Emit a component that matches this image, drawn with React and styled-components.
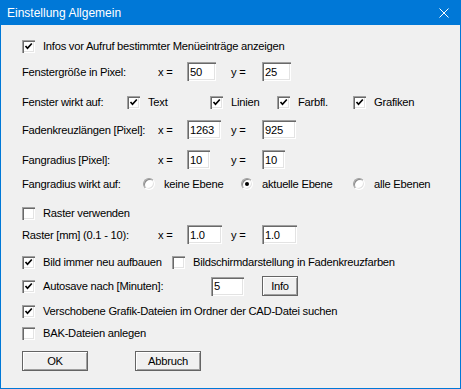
import React from 'react'
import styled, { createGlobalStyle } from 'styled-components'

const Global = createGlobalStyle`
  html, body { margin:0; padding:0; background:#f0f0f0; }
  body { font-family:"Liberation Sans",Arial,sans-serif; }
`

const Window = styled.div`
  width:461px;
  height:389px;
  box-sizing:border-box;
  border:1px solid #0078d7;
  border-top:none;
  background:#f0f0f0;
  display:flex;
  flex-direction:column;
  color:#000;
  font-size:11.2px;
  letter-spacing:-0.25px;
`

const TitleBar = styled.div`
  height:25px;
  margin:0 -1px;
  background:#0078d7;
  display:flex;
  align-items:center;
  justify-content:space-between;
  padding:0 12px 0 7px;
  letter-spacing:0;
`

const Title = styled.span`
  color:#fff;
  font-family:"Liberation Sans",Arial,sans-serif;
  font-size:12px;
  margin-top:1px;
`

const Content = styled.div`
  display:flex;
  flex-direction:column;
  padding-left:21px;
`

const Row = styled.div`
  display:flex;
  align-items:center;
  height:${({ $h }) => $h || 20}px;
  margin-top:${({ $mt }) => $mt || 0}px;
`

const Label = styled.span`
  width:${({ $w }) => $w}px;
  flex-shrink:0;
  white-space:nowrap;
`

const Cell = styled.div`
  width:${({ $w }) => $w}px;
  flex-shrink:0;
  display:flex;
  align-items:center;
`

const Field = styled.div`
  width:${({ $w }) => $w}px;
  height:19px;
  box-sizing:border-box;
  background:#fff;
  padding-left:3px;
  flex-shrink:0;
  display:flex;
  align-items:center;
  box-shadow:inset 1px 1px #a0a0a0, inset 2px 2px #696969, inset -1px -1px #fff, inset -2px -2px #e3e3e3;
`

const Box = styled.span`
  width:13px;
  height:13px;
  box-sizing:border-box;
  flex-shrink:0;
  background:#fff;
  box-shadow:inset 1px 1px #a0a0a0, inset 2px 2px #696969, inset -1px -1px #fff, inset -2px -2px #e3e3e3;
  display:flex;
  align-items:center;
  justify-content:center;
`

const Item = styled.label`
  display:flex;
  align-items:center;
  gap:8px;
  width:${({ $w }) => ($w ? `${$w}px` : 'auto')};
  flex-shrink:0;
  white-space:nowrap;
`

const Circle = styled.span`
  width:12px;
  height:12px;
  box-sizing:border-box;
  flex-shrink:0;
  border-radius:50%;
  background:#fff;
  border:1px solid;
  border-color:#a0a0a0 #fff #fff #a0a0a0;
  box-shadow:inset 1px 1px #8a8a8a, inset -1px -1px #e3e3e3;
  display:flex;
  align-items:center;
  justify-content:center;
  margin-right:1px;
`

const Dot = styled.span`
  width:4px;
  height:4px;
  border-radius:50%;
  background:#000;
`

const Button = styled.button`
  width:${({ $w }) => $w}px;
  height:20px;
  padding:0;
  margin-left:${({ $ml }) => $ml || 0}px;
  background:#f0f0f0;
  border:1px solid #646464;
  box-shadow:inset 1px 1px #fff, inset -1px -1px #a0a0a0;
  font:inherit;
  letter-spacing:inherit;
  color:#000;
`

const Check = ({ on }) => (
  <Box>
    {on && (
      <svg width="9" height="9" viewBox="0 0 9 9">
        <path d="M1.5 4 L3.5 6.2 L7.8 1.5" fill="none" stroke="#000" strokeWidth="1.7" />
      </svg>
    )}
  </Box>
)

const CheckItem = ({ on, w, children }) => (
  <Item $w={w}>
    <Check on={on} />
    {children}
  </Item>
)

const Radio = ({ on, w, children }) => (
  <Item $w={w}>
    <Circle>{on && <Dot />}</Circle>
    {children}
  </Item>
)

const XYRow = ({ label, x, y, wx, wy, mt }) => (
  <Row $h={19} $mt={mt}>
    <Label $w={136}>{label}</Label>
    <Label $w={29}>x =</Label>
    <Cell $w={44}><Field $w={wx}>{x}</Field></Cell>
    <Label $w={31}>y =</Label>
    <Field $w={wy}>{y}</Field>
  </Row>
)

export default function App() {
  return (
    <>
      <Global />
      <Window>
        <TitleBar>
          <Title>Einstellung Allgemein</Title>
          <svg width="10" height="10" viewBox="0 0 10 10">
            <path d="M0.5 0.5 L9.5 9.5 M9.5 0.5 L0.5 9.5" stroke="#fff" strokeWidth="1" />
          </svg>
        </TitleBar>
        <Content>
          <Row $mt={11}>
            <CheckItem on>Infos vor Aufruf bestimmter Menüeinträge anzeigen</CheckItem>
          </Row>
          <XYRow mt={6} label="Fenstergröße in Pixel:" x="50" y="25" wx={29} wy={29} />
          <Row $mt={11}>
            <Label $w={105}>Fenster wirkt auf:</Label>
            <CheckItem on w={83}>Text</CheckItem>
            <CheckItem on w={67}>Linien</CheckItem>
            <CheckItem on w={76}>Farbfl.</CheckItem>
            <CheckItem on>Grafiken</CheckItem>
          </Row>
          <XYRow mt={8} label="Fadenkreuzlängen [Pixel]:" x="1263" y="925" wx={34} wy={34} />
          <XYRow mt={11} label="Fangradius [Pixel]:" x="10" y="10" wx={23} wy={23} />
          <Row $mt={5}>
            <Label $w={121}>Fangradius wirkt auf:</Label>
            <Radio w={98}>keine Ebene</Radio>
            <Radio on w={112}>aktuelle Ebene</Radio>
            <Radio>alle Ebenen</Radio>
          </Row>
          <Row $mt={9}>
            <CheckItem>Raster verwenden</CheckItem>
          </Row>
          <XYRow mt={2} label="Raster [mm] (0.1 - 10):" x="1.0" y="1.0" wx={35} wy={35} />
          <Row $mt={8}>
            <CheckItem on w={150}>Bild immer neu aufbauen</CheckItem>
            <CheckItem>Bildschirmdarstellung in Fadenkreuzfarben</CheckItem>
          </Row>
          <Row $mt={4}>
            <CheckItem on w={189}>Autosave nach [Minuten]:</CheckItem>
            <Field $w={33}>5</Field>
            <Button $w={36} $ml={18}>Info</Button>
          </Row>
          <Row $mt={5}>
            <CheckItem on>Verschobene Grafik-Dateien im Ordner der CAD-Datei suchen</CheckItem>
          </Row>
          <Row $mt={2}>
            <CheckItem>BAK-Dateien anlegen</CheckItem>
          </Row>
          <Row $mt={8}>
            <Button $w={66}>OK</Button>
            <Button $w={66} $ml={47}>Abbruch</Button>
          </Row>
        </Content>
      </Window>
    </>
  )
}
